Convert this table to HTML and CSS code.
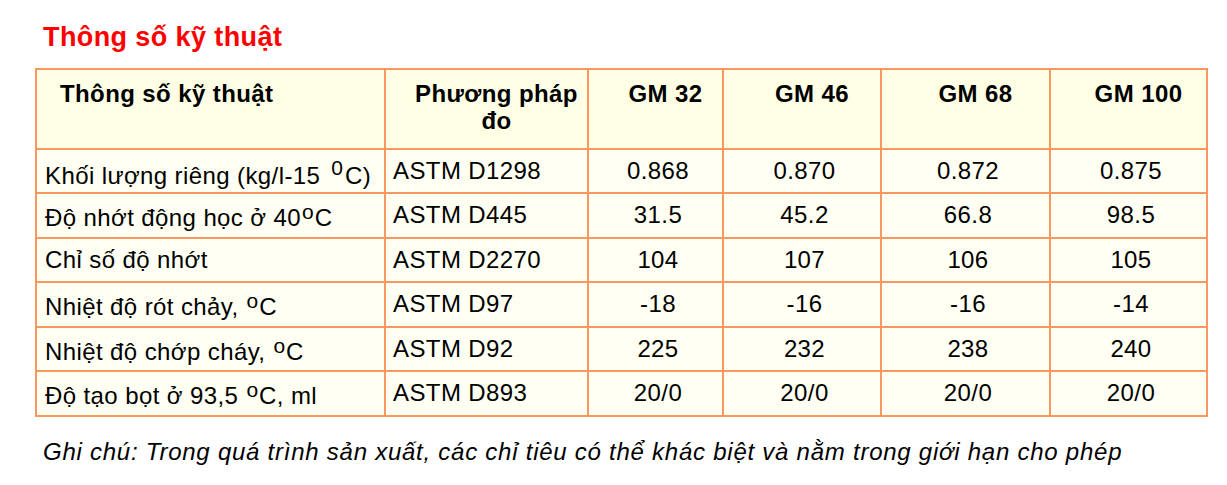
FILE: index.html
```html
<!DOCTYPE html>
<html lang="vi">
<head>
<meta charset="utf-8">
<title>Thông số kỹ thuật</title>
<link rel="stylesheet" href="styles.css">
</head>
<body>
<div class="page">
  <h2 class="title">Thông số kỹ thuật</h2>
  <div class="spec-table">
    <div class="cell head head-first">Thông số kỹ thuật</div>
    <div class="cell head head-center">Phương pháp đo</div>
    <div class="cell head head-center">GM 32</div>
    <div class="cell head head-center">GM 46</div>
    <div class="cell head head-center">GM 68</div>
    <div class="cell head head-center">GM 100</div>

    <div class="cell data label">Khối lượng riêng (kg/l-15 <sup class="deg deg-zero">0</sup>C)</div>
    <div class="cell data method">ASTM D1298</div>
    <div class="cell data num">0.868</div>
    <div class="cell data num">0.870</div>
    <div class="cell data num">0.872</div>
    <div class="cell data num">0.875</div>

    <div class="cell data label">Độ nhớt động học ở 40<sup class="deg">o</sup>C</div>
    <div class="cell data method">ASTM D445</div>
    <div class="cell data num">31.5</div>
    <div class="cell data num">45.2</div>
    <div class="cell data num">66.8</div>
    <div class="cell data num">98.5</div>

    <div class="cell data label">Chỉ số độ nhớt</div>
    <div class="cell data method">ASTM D2270</div>
    <div class="cell data num">104</div>
    <div class="cell data num">107</div>
    <div class="cell data num">106</div>
    <div class="cell data num">105</div>

    <div class="cell data label">Nhiệt độ rót chảy, <sup class="deg">o</sup>C</div>
    <div class="cell data method">ASTM D97</div>
    <div class="cell data num">-18</div>
    <div class="cell data num">-16</div>
    <div class="cell data num">-16</div>
    <div class="cell data num">-14</div>

    <div class="cell data label">Nhiệt độ chớp cháy, <sup class="deg">o</sup>C</div>
    <div class="cell data method">ASTM D92</div>
    <div class="cell data num">225</div>
    <div class="cell data num">232</div>
    <div class="cell data num">238</div>
    <div class="cell data num">240</div>

    <div class="cell data label">Độ tạo bọt ở 93,5 <sup class="deg">o</sup>C, ml</div>
    <div class="cell data method">ASTM D893</div>
    <div class="cell data num">20/0</div>
    <div class="cell data num">20/0</div>
    <div class="cell data num">20/0</div>
    <div class="cell data num">20/0</div>
  </div>
  <p class="note">Ghi chú: Trong quá trình sản xuất, các chỉ tiêu có thể khác biệt và nằm trong giới hạn cho phép</p>
</div>
</body>
</html>
```

FILE: styles.css
```css
html, body {
  margin: 0;
  padding: 0;
  background: #ffffff;
}

.page {
  padding: 21px 0 0 35px;
  font-family: "Liberation Sans", Arial, sans-serif;
  color: #000000;
}

.title {
  margin: 0 0 15px 8px;
  font-size: 27px;
  line-height: 32px;
  font-weight: bold;
  letter-spacing: 0.4px;
  color: #ff0000;
}

.spec-table {
  display: grid;
  grid-template-columns: 347px 201px 133px 156px 167px 155px;
  grid-template-rows: 78px 42px 43px 42px 43px 42px 43px;
  gap: 2px;
  padding: 2px;
  width: max-content;
  background: #f9975f;
}

.cell {
  font-size: 24px;
  line-height: 27px;
  letter-spacing: 0.4px;
}

.head {
  background: #ffffe6;
  font-weight: bold;
  padding-top: 10px;
}

.head-first {
  padding-left: 23px;
}

.head-center {
  text-align: center;
  padding-left: 20px;
}

.data {
  background: #fffff3;
  padding-top: 7px;
}

.label {
  padding-left: 8px;
}

.method {
  padding-left: 7px;
}

.num {
  text-align: center;
  padding-left: 5px;
}

.deg {
  font-size: 21px;
  line-height: 1;
  vertical-align: 7px;
  letter-spacing: 0;
  margin: 0 1px;
}

.deg-zero {
  font-size: 21px;
  vertical-align: 9px;
  margin: 0 2px 0 4px;
}

.note {
  margin: 22px 0 0 8px;
  font-size: 24px;
  line-height: 26px;
  font-style: italic;
  letter-spacing: 0.75px;
}
```
